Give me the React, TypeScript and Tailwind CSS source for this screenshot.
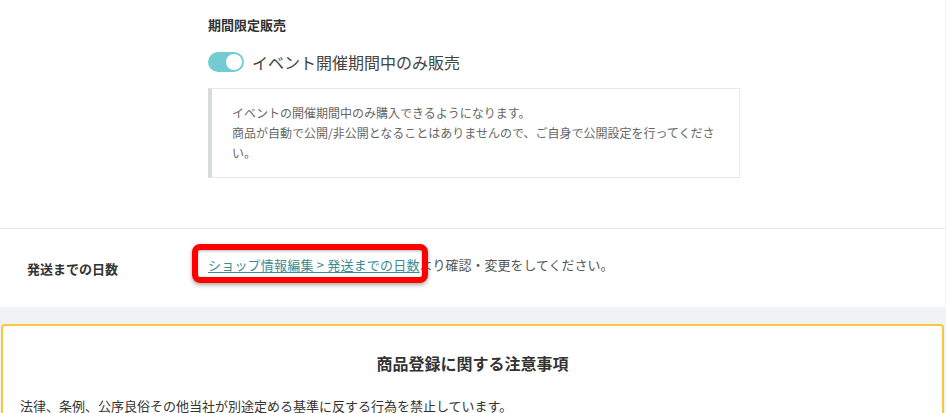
export default function App() {
  return (
    <div className="w-[946px] h-[413px] overflow-hidden bg-[#f0f3f6] text-[#333] font-['Noto_Sans_CJK_JP','Noto_Sans',sans-serif]">
      <div className="w-[945px] bg-white">
        {/* 期間限定販売 */}
        <section className="pl-[208px] pt-[16px] pb-[50px]">
          <h3 className="text-[13px] leading-[18px] font-bold text-[#333]">期間限定販売</h3>
          <label className="mt-[18px] flex items-center gap-[8px] h-[20px]">
            <span className="relative w-[36px] h-[20px] rounded-full bg-[#74ccd3] shrink-0">
              <span className="absolute right-[2px] top-[2px] w-[16px] h-[16px] rounded-full bg-white" />
            </span>
            <span className="text-[16px] leading-[20px] text-[#444]">イベント開催期間中のみ販売</span>
          </label>
          <div className="mt-[16px] w-[532px] border border-[#e6e8eb] border-l-[4px] border-l-[#d7dbe0] pl-[20px] pr-[16px] py-[14px] text-[12px] leading-[20px] text-[#666]">
            <p>イベントの開催期間中のみ購入できるようになります。</p>
            <p>商品が自動で公開/非公開となることはありませんので、ご自身で公開設定を行ってください。</p>
          </div>
        </section>

        {/* 発送までの日数 */}
        <div className="border-t border-[#e6e8eb] h-[79px] flex items-center">
          <div className="w-[208px] pl-[27px] pt-[2px] text-[13px] font-bold text-[#333]">発送までの日数</div>
          <div className="text-[13px] leading-[18px] text-[#555] pb-[7px]">
            <span className="relative">
              <a className="text-[#3a8b93] underline underline-offset-2 tracking-[0.2px]">ショップ情報編集&nbsp;&gt;&nbsp;発送までの日数</a>
              <span className="absolute left-[-16px] top-[-11px] w-[236px] h-[39px] border-[6px] border-[#ff0000] rounded-[8px] shadow-[0_2px_4px_rgba(0,0,0,0.35),inset_0_1px_3px_rgba(0,0,0,0.3)]" />
            </span>
            より確認・変更をしてください。
          </div>
        </div>
      </div>

      {/* 注意事項 */}
      <div className="mt-[17px] ml-[1px] w-[943px] bg-white border-2 border-[#fbc53d] rounded-[4px] pt-[25px] px-[17px]">
        <h2 className="text-center text-[16px] leading-[24px] font-bold text-[#333]">商品登録に関する注意事項</h2>
        <p className="mt-[21px] text-[13px] leading-[20px] text-[#333]">
          法律、条例、公序良俗その他当社が別途定める基準に反する行為を禁止しています。
        </p>
      </div>
    </div>
  );
}
